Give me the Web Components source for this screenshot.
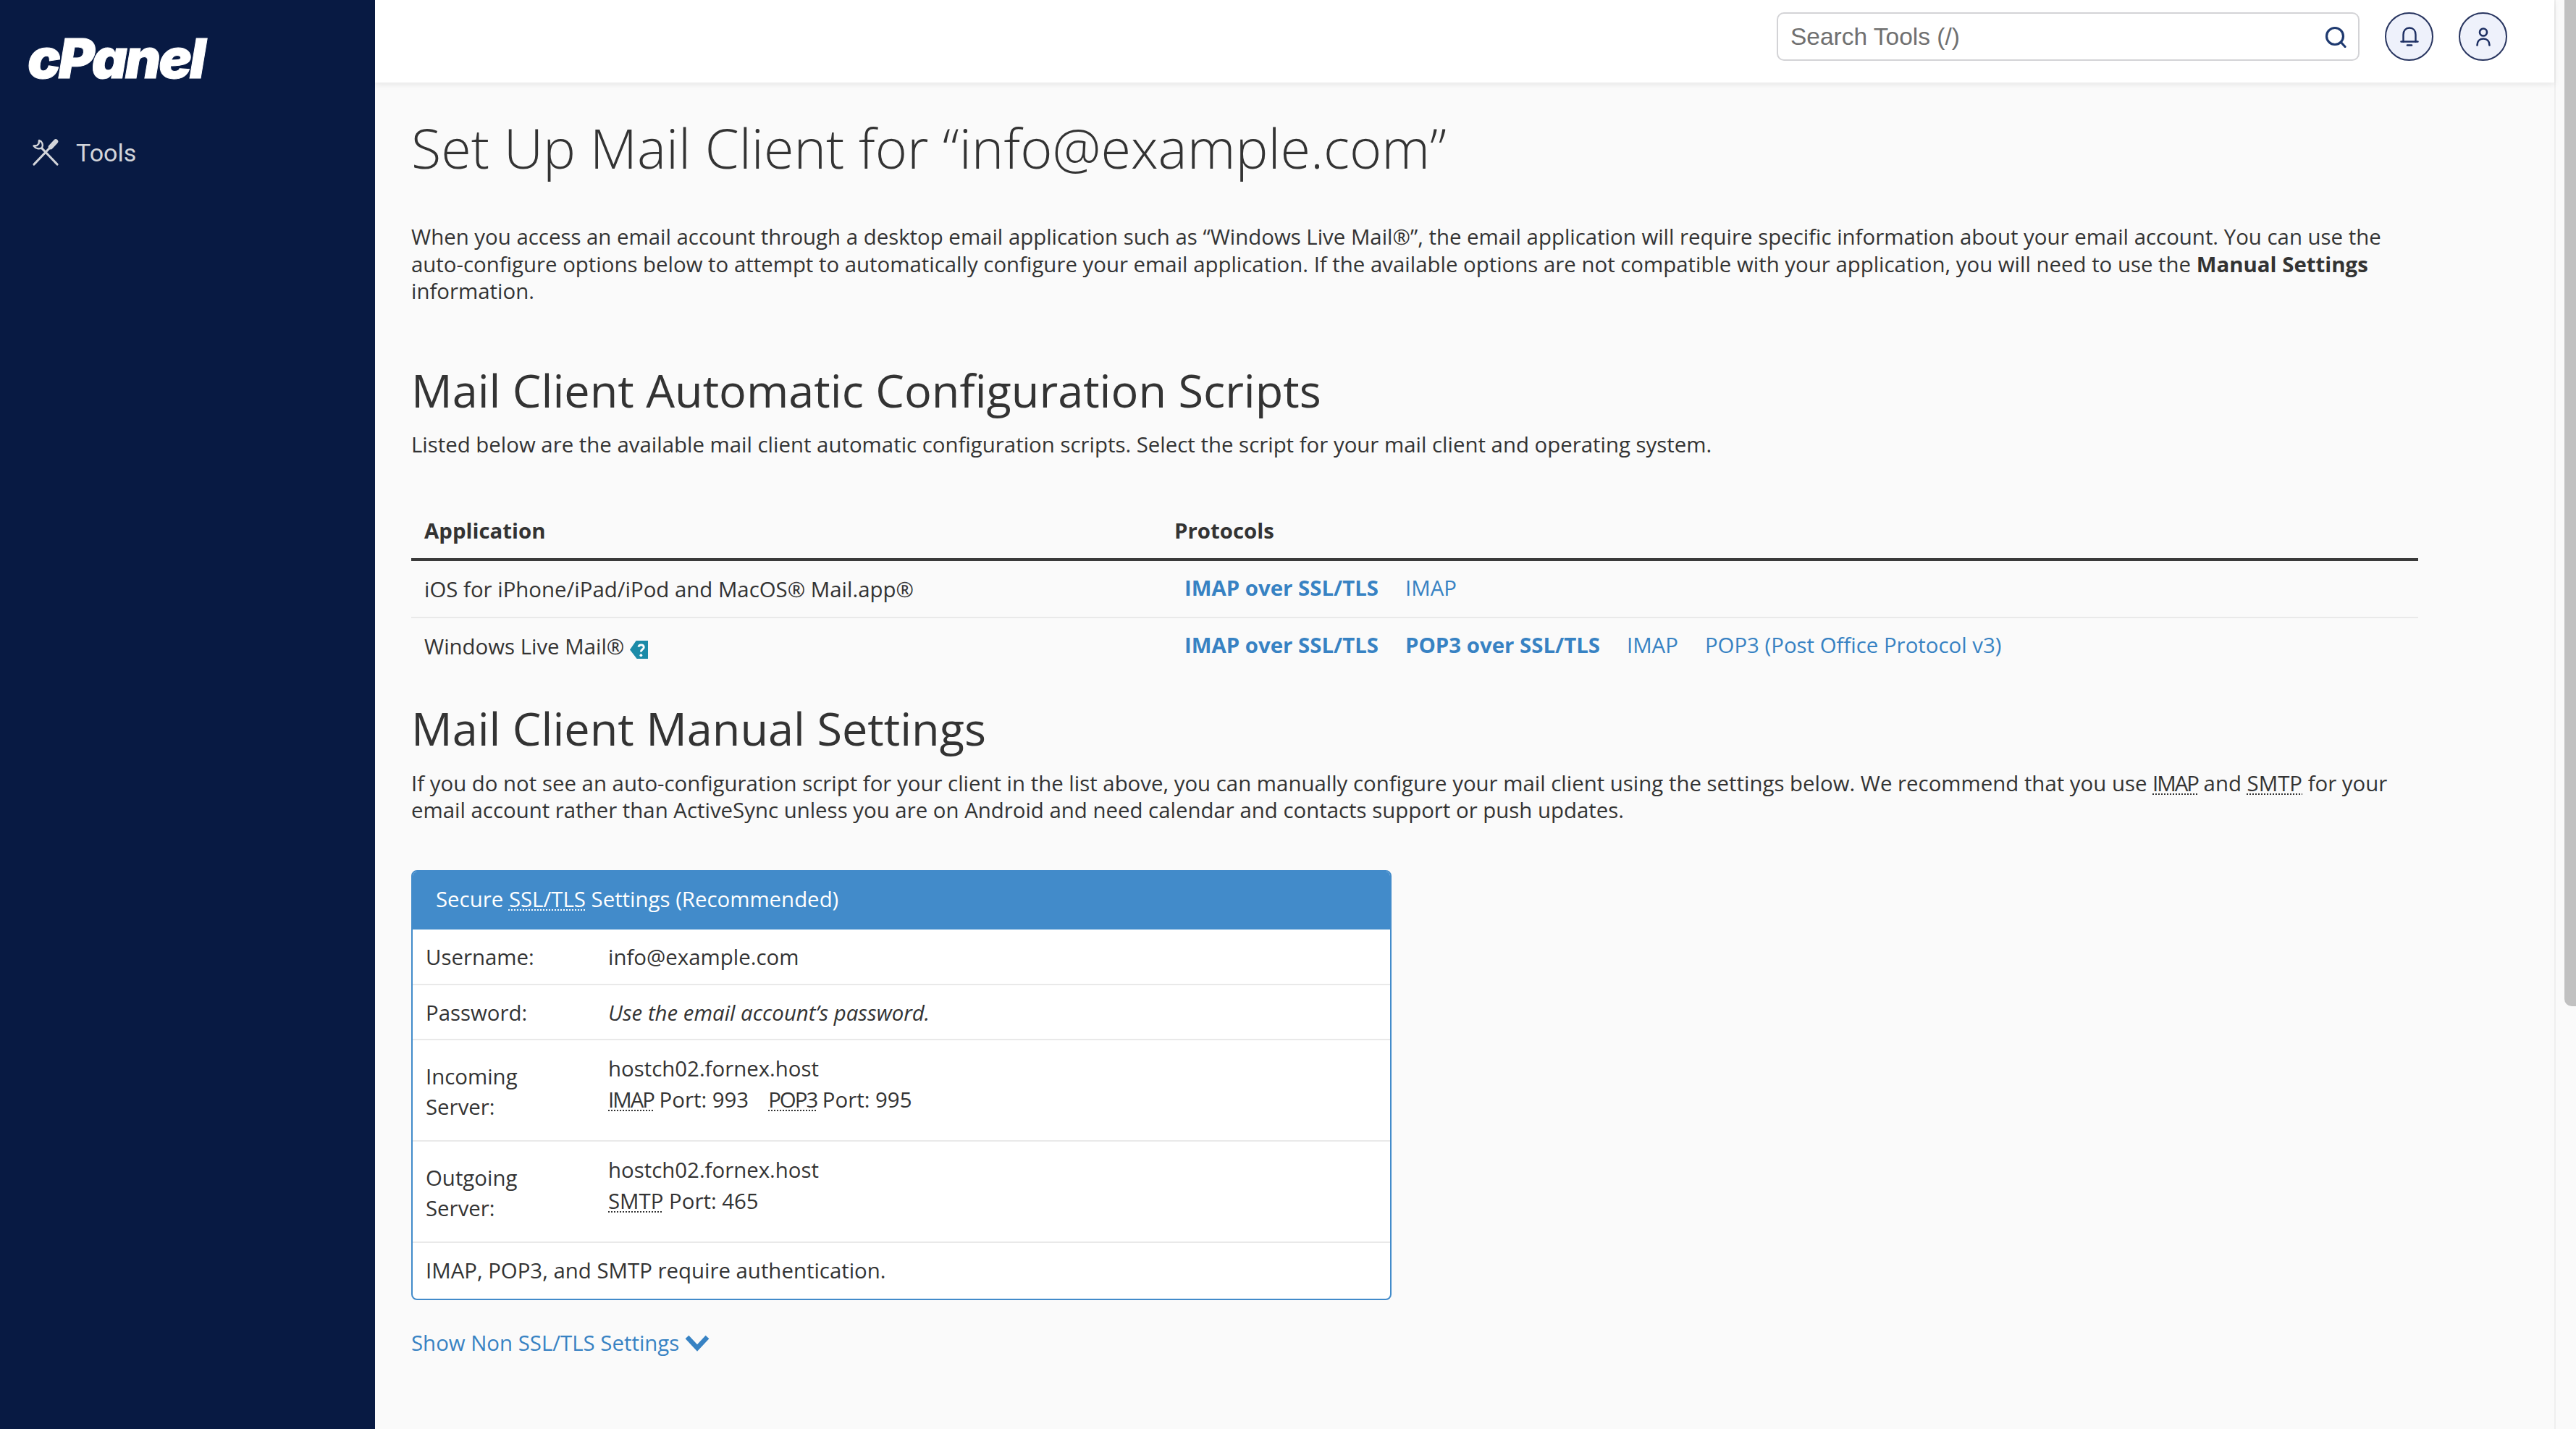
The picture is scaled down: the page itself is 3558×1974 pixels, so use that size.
<!DOCTYPE html>
<html lang="en"><head><meta charset="utf-8"><title>Set Up Mail Client</title>
<style>
html,body{margin:0;padding:0;background:#fafafa}
body{width:3558px;height:1974px;overflow:hidden;font-family:"Open Sans","Liberation Sans",sans-serif;color:#333}
</style></head><body>
<cp-app>
  <cp-sidebar slot="side"></cp-sidebar>
  <cp-topbar slot="top"></cp-topbar>
  <cp-title>Set Up Mail Client for “info@example.com”</cp-title>
  <cp-para style="--mt:62px">When you access an email account through a desktop email application such as “Windows Live Mail®”, the email application will require specific information about your email account. You can use the auto-configure options below to attempt to automatically configure your email application. If the available options are not compatible with your application, you will need to use the <b>Manual Settings</b> information.</cp-para>
  <cp-heading style="--mt:79px">Mail Client Automatic Configuration Scripts</cp-heading>
  <cp-para style="--mt:19px">Listed below are the available mail client automatic configuration scripts. Select the script for your mail client and operating system.</cp-para>
  <cp-script-table style="--mt:61.500px">
    <cp-script-row>iOS for iPhone/iPad/iPod and MacOS® Mail.app®
      <cp-link slot="links" bold>IMAP over SSL/TLS</cp-link><cp-link slot="links">IMAP</cp-link></cp-script-row>
    <cp-script-row last>Windows Live Mail® <cp-help></cp-help>
      <cp-link slot="links" bold>IMAP over SSL/TLS</cp-link><cp-link slot="links" bold>POP3 over SSL/TLS</cp-link><cp-link slot="links">IMAP</cp-link><cp-link slot="links">POP3 (Post Office Protocol v3)</cp-link></cp-script-row>
  </cp-script-table>
  <cp-heading style="--mt:35px">Mail Client Manual Settings</cp-heading>
  <cp-para style="--mt:20px">If you do not see an auto-configuration script for your client in the list above, you can manually configure your mail client using the settings below. We recommend that you use <cp-abbr tight>IMAP</cp-abbr> and <cp-abbr>SMTP</cp-abbr> for your email account rather than ActiveSync unless you are on Android and need calendar and contacts support or push updates.</cp-para>
  <cp-settings-card>
    <span slot="title">Secure <cp-abbr>SSL/TLS</cp-abbr> Settings (Recommended)</span>
    <cp-setting-row h="75" label="Username:">info@example.com</cp-setting-row>
    <cp-setting-row h="74" label="Password:"><i>Use the email account’s password.</i></cp-setting-row>
    <cp-setting-row h="138" tall label="Incoming Server:"><cp-setting-line>hostch02.fornex.host</cp-setting-line><cp-setting-line><cp-abbr tight>IMAP</cp-abbr> Port: 993<cp-spacer></cp-spacer><cp-abbr tight>POP3</cp-abbr> Port: 995</cp-setting-line></cp-setting-row>
    <cp-setting-row h="138" tall label="Outgoing Server:"><cp-setting-line>hostch02.fornex.host</cp-setting-line><cp-setting-line><cp-abbr>SMTP</cp-abbr> Port: 465</cp-setting-line></cp-setting-row>
    <cp-setting-note>IMAP, POP3, and SMTP require authentication.</cp-setting-note>
  </cp-settings-card>
  <cp-toggle>Show Non SSL/TLS Settings</cp-toggle>
</cp-app>
<script>
function def(name, html, init){
  customElements.define(name, class extends HTMLElement{
    constructor(){super();this.attachShadow({mode:'open'}).innerHTML=html;}
    connectedCallback(){ if(init) init(this); }
  });
}
const FS='29.400px';
const LINK='#3782c3';
def('cp-app',`<style>
:host{display:grid;grid-template-columns:518px 1fr 28px;width:3558px;height:1974px;overflow:hidden}
.col{display:flex;flex-direction:column;min-width:0;border-right:2px solid #efefef;background:#fafafa}
main{padding:47px 0 0 50px;width:2772px;box-sizing:content-box;display:flex;flex-direction:column;align-items:flex-start}
.bar{background:#fafafa;padding-left:12px}
.thumb{width:16px;height:1390px;background:#c1c1c1;border-radius:0 0 0 10px}
</style><slot name="side"></slot><div class="col"><slot name="top"></slot><main><slot></slot></main></div><div class="bar"><div class="thumb"></div></div>`);
def('cp-sidebar',`<style>
:host{display:flex;flex-direction:column;background:#081a43;height:1974px;box-sizing:border-box;padding:48px 0 0 38px}
.logo{display:block;font:italic 900 76px/64px Inter,"Open Sans",sans-serif;color:#fff;letter-spacing:-3px;height:64px;-webkit-text-stroke:1px #fff}
.tools{display:flex;align-items:center;gap:23px;margin:79px 0 0 6px;color:#d3d5da;font:400 34px/40px Roboto,sans-serif}
svg{width:38px;height:38px;display:block}
</style><span class="logo">cPanel</span>
<div class="tools"><svg viewBox="0 0 38 38" fill="none" stroke="#d3d5da" stroke-linecap="round" stroke-linejoin="round"><path d="M3 35 L24 13" stroke-width="3.2"/><path d="M26 11 L33 3.500" stroke-width="6.500"/><path d="M35 35 L14 13" stroke-width="3.200"/><path d="M10 2 C14.500 3.500 16 8 14 12 C10 14.500 5.500 13.500 2.500 9.500 L7 9 L9.500 6.500 Z" stroke-width="2.400"/></svg><span>Tools</span></div>`);
def('cp-topbar',`<style>
:host{display:flex;align-items:flex-start;justify-content:flex-end;height:114px;flex:none;background:#fff;box-shadow:0 3px 8px rgba(0,0,0,.08);position:relative;padding:17px 65px 0 0;gap:35px;box-sizing:border-box}
.search{width:805px;height:67px;box-sizing:border-box;border:2px solid #d3d3d6;border-radius:10px;display:flex;align-items:center;justify-content:space-between;padding:0 16px 0 17px;font:33.500px "Liberation Sans",Arial,sans-serif;color:#707070;background:#fff}
.btn{width:67px;height:67px;box-sizing:border-box;border-radius:50%;border:2px solid #27345f;background:#eef1fb;display:flex;align-items:center;justify-content:center}
svg{display:block}
</style>
<div class="search" role="searchbox"><span>Search Tools (/)</span><svg width="30" height="30" viewBox="0 0 30 30" fill="none" stroke="#1f3a70" stroke-width="3.2" stroke-linecap="round"><circle cx="14" cy="14" r="11.500"/><path d="M22.500 22.500 L28 28.500"/></svg></div>
<div class="btn"><svg width="26" height="27" viewBox="0 0 26 27" fill="none" stroke="#1d2f63" stroke-width="2.400" stroke-linecap="round" stroke-linejoin="round"><path d="M4.500 20.500 V11 C4.500 5 8 1.500 13 1.500 C18 1.500 21.500 5 21.500 11 V20.500"/><path d="M1.500 20.500 H24.500"/><path d="M10 25.500 H16" stroke-width="2.600"/></svg></div>
<div class="btn"><svg width="22" height="26" viewBox="0 0 22 26" fill="none" stroke="#1d2f63" stroke-width="2.600" stroke-linecap="round"><circle cx="11" cy="6.500" r="5"/><path d="M2.500 24.500 C2.500 19 6 15.500 11 15.500 C16 15.500 19.500 19 19.500 24.500"/></svg></div>`);
def('cp-title',`<style>:host{display:block;font:300 75.600px/86px "Open Sans",sans-serif;color:#333;white-space:nowrap}</style><slot></slot>`);
def('cp-heading',`<style>:host{display:block;font:400 63px/76px "Open Sans",sans-serif;color:#333;margin-top:var(--mt,0);white-space:nowrap}</style><slot></slot>`);
def('cp-para',`<style>:host{display:block;width:2740px;font:400 ${FS}/37.500px "Open Sans",sans-serif;margin-top:var(--mt,0)}</style><slot></slot>`);
def('cp-abbr',`<style>:host{display:inline;text-decoration:underline dotted 2px;text-underline-offset:4px}:host([tight]){letter-spacing:-2px}</style><slot></slot>`);
def('cp-spacer',`<style>:host{display:inline-block;width:27px}</style>`);
def('cp-link',`<style>:host{display:inline-block;color:${LINK};font:400 ${FS}/37.500px "Open Sans",sans-serif}:host([bold]){font-weight:700}</style><slot></slot>`);
def('cp-help',`<style>:host{display:inline-block;vertical-align:-6px;margin-left:0;width:25px;height:25px}svg{display:block}</style><svg width="25" height="25" viewBox="0 0 26 26"><path d="M9 0 H26 V26 H10 L0 13 Z" fill="#1c8ba8"/><path d="M12.500 9 C13 5 20 5 20 9.500 C20 12.500 16 12.500 16 16" fill="none" stroke="#fff" stroke-width="3"/><circle cx="16" cy="21" r="2" fill="#fff"/></svg>`);
def('cp-script-table',`<style>
:host{display:block;width:2772px;margin-top:var(--mt,0)}
.h{display:grid;grid-template-columns:1036px 1fr;height:76px;box-sizing:border-box;font:700 ${FS}/76px "Open Sans",sans-serif;padding-left:18px;color:#333}
.rule{height:4px;background:#3a3a3a}
</style><div class="h"><span>Application</span><span>Protocols</span></div><div class="rule"></div><slot></slot>`);
def('cp-script-row',`<style>
:host{display:grid;grid-template-columns:1036px 1fr;height:79px;box-sizing:border-box;border-bottom:2px solid #e9e9e9;padding-left:18px;font:400 ${FS}/78px "Open Sans",sans-serif;white-space:nowrap}
:host([last]){border-bottom:0}
.l{display:flex;gap:37px;padding-left:14px;align-items:center;height:77px}
</style><div><slot></slot></div><div class="l"><slot name="links"></slot></div>`);
def('cp-settings-card',`<style>
:host{display:block;width:1354px;box-sizing:border-box;margin-top:63px;border:2px solid #428bca;border-radius:8px;background:#fff;overflow:hidden}
.t{background:#428bca;color:#fff;height:80px;font:400 ${FS}/77px "Open Sans",sans-serif;padding-left:32px}
</style><div class="t"><slot name="title"></slot></div><slot></slot>`);
def('cp-setting-row',`<style>
:host{display:grid;grid-template-columns:252px 1fr;padding-left:18px;border-bottom:2px solid #e9e9e9;font:400 ${FS}/41.500px "Open Sans",sans-serif;box-sizing:content-box;align-items:center}
.lab{width:190px;margin-top:4px}
.val{margin-top:4px}
:host([tall]){align-items:start}
:host([tall]) .lab{margin-top:0;padding-top:29px;line-height:42px}
:host([tall]) .val{margin-top:0;padding-top:18px}
</style><div class="lab"></div><div class="val"><slot></slot></div>`,el=>{el.style.height=el.getAttribute('h')+'px';el.shadowRoot.querySelector('.lab').textContent=el.getAttribute('label');});
def('cp-setting-line',`<style>:host{display:block;line-height:43px}</style><slot></slot>`);
def('cp-setting-note',`<style>:host{display:block;padding-left:18px;font:400 ${FS}/77px "Open Sans",sans-serif}</style><slot></slot>`);
def('cp-toggle',`<style>:host{display:flex;align-items:center;gap:8px;margin-top:41px;color:${LINK};font:400 ${FS}/37.500px "Open Sans",sans-serif}svg{display:block}</style><slot></slot><svg width="34" height="24" viewBox="0 0 34 24" fill="none" stroke="${LINK}" stroke-width="6.500" stroke-linejoin="miter"><path d="M3 4 L17 19 L31 4"/></svg>`);
</script></body></html>
